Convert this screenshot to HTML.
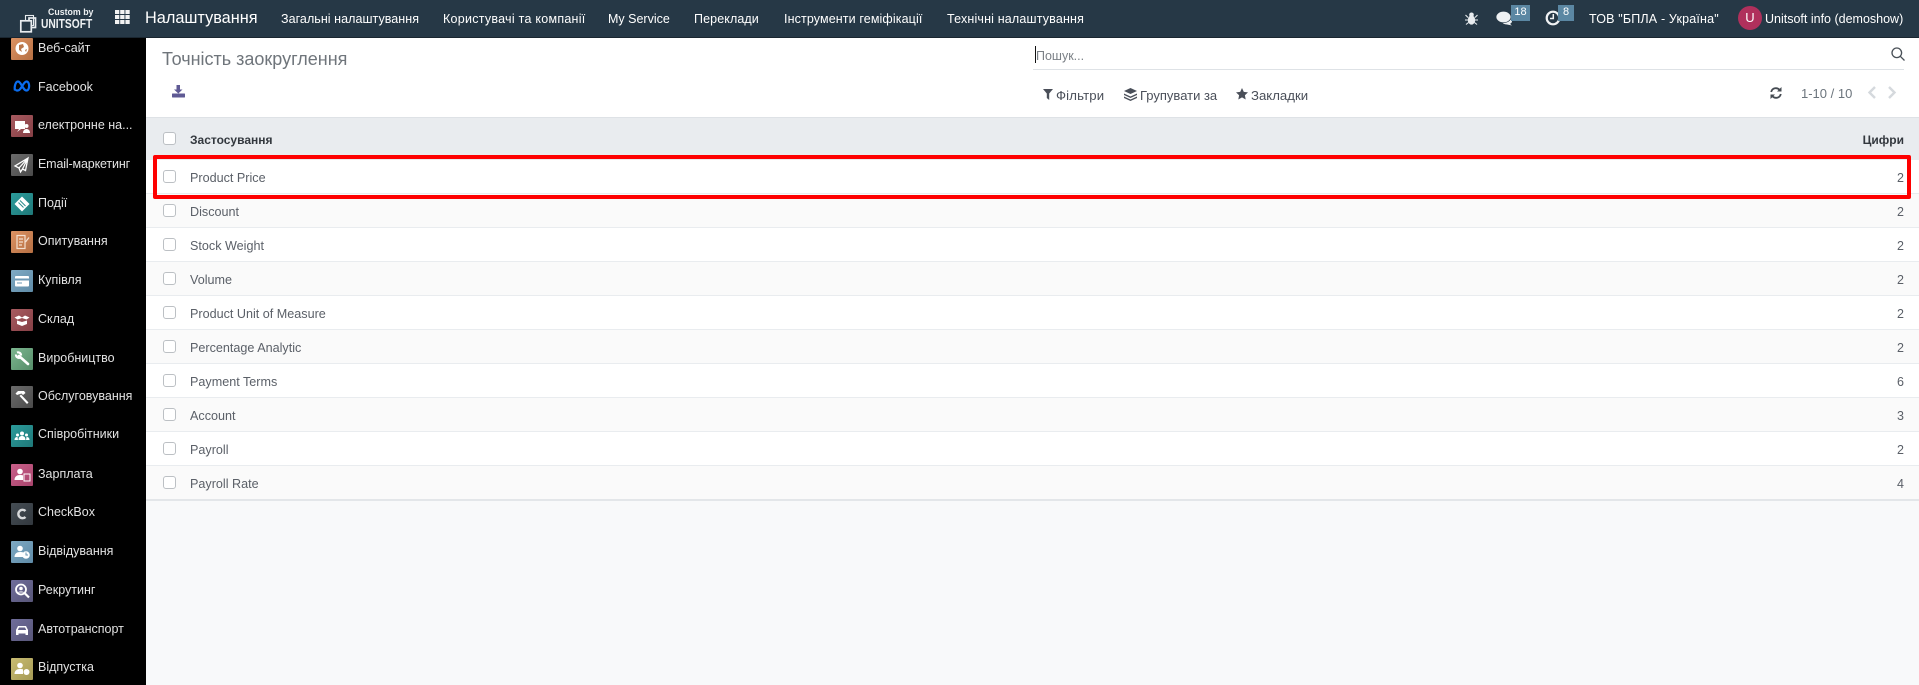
<!DOCTYPE html>
<html lang="uk">
<head>
<meta charset="utf-8">
<title>Точність заокруглення</title>
<style>
html,body{margin:0;padding:0;width:1919px;height:685px;overflow:hidden;background:#f8f9fa;font-family:"Liberation Sans","Noto Sans CJK SC",sans-serif;}
.a{position:absolute;white-space:nowrap;line-height:1;}
#nav{position:absolute;left:0;top:0;width:1919px;height:37px;background:#263846;border-bottom:1px solid #1a2630;}
.m{color:#fff;font-size:12.5px;top:12.5px;}
#side{position:absolute;left:0;top:38px;width:146px;height:647px;background:#000;overflow:hidden;}
.lb{position:absolute;left:38px;color:#e2e2e2;font-size:12.5px;line-height:1;white-space:nowrap;}
.ic{position:absolute;left:11px;width:22px;height:22px;border-radius:1px;}
.ic svg{display:block;width:22px;height:22px;}
#cp{position:absolute;left:146px;top:38px;width:1773px;height:79px;background:#fff;border-bottom:1px solid #dee2e6;}
#th{position:absolute;left:146px;top:118px;width:1773px;height:42px;background:#e9ecef;}
.r{position:absolute;left:146px;width:1773px;height:33px;border-bottom:1px solid #e9ecef;background:#fff;}
.r.e{background:#fafafa;}
.cb{position:absolute;left:163px;width:11px;height:11px;border:1px solid #bcc0c4;border-radius:3px;background:#fff;}
.t{position:absolute;left:190px;color:#5b6068;font-size:12.6px;line-height:1;}
.n{position:absolute;right:15px;color:#5b6068;font-size:12.5px;line-height:1;}
.fb{color:#4a4f59;font-size:13.2px;top:88.5px;}
</style>
</head>
<body>
<div id="nav"></div>

<!-- logo -->
<svg class="a" style="left:18px;top:13px" width="20" height="20" viewBox="0 0 20 20" fill="none" stroke="#e8ecef" stroke-width="1.7"><rect x="7.500" y="2.500" width="8" height="10" stroke-width="1.100"/><rect x="11" y="5" width="6.500" height="9.500"/><rect x="2.800" y="7.800" width="10.500" height="11" fill="#263846"/></svg>
<div class="a" style="left:48px;top:7.500px;color:#eef1f3;font-size:8.800px;font-weight:bold">Custom by</div>
<div class="a" style="left:41px;top:17.500px;color:#eef1f3;font-size:12.500px;font-weight:bold;transform:scaleX(.82);transform-origin:left top">UNITSOFT</div>
<svg class="a" style="left:115px;top:10px" width="15" height="14" viewBox="0 0 15 14" fill="#f2f2f2"><rect x="0" y="0" width="4.300" height="4"/><rect x="5.200" y="0" width="4.300" height="4"/><rect x="10.400" y="0" width="4.300" height="4"/><rect x="0" y="5" width="4.300" height="4"/><rect x="5.200" y="5" width="4.300" height="4"/><rect x="10.400" y="5" width="4.300" height="4"/><rect x="0" y="10" width="4.300" height="4"/><rect x="5.200" y="10" width="4.300" height="4"/><rect x="10.400" y="10" width="4.300" height="4"/></svg>

<div class="a" style="left:145px;top:10px;color:#fff;font-size:16.300px">Налаштування</div>
<div class="a m" style="left:281px;letter-spacing:.05px">Загальні налаштування</div>
<div class="a m" style="left:443px;letter-spacing:.26px">Користувачі та компанії</div>
<div class="a m" style="left:608px">My Service</div>
<div class="a m" style="left:694px;letter-spacing:.1px">Переклади</div>
<div class="a m" style="left:784px;letter-spacing:.12px">Інструменти геміфікації</div>
<div class="a m" style="left:947px;letter-spacing:.17px">Технічні налаштування</div>

<!-- right nav -->
<svg class="a" style="left:1465px;top:12px" width="13" height="13" viewBox="0 0 13 13" fill="#e8ecef"><ellipse cx="6.500" cy="8" rx="3.700" ry="4.600"/><circle cx="6.500" cy="2.800" r="2.300"/><path d="M0.500 3l2.500 2.500M12.500 3L10 5.500M0 8h3M13 8h-3M1 12.500l2.500-2M12 12.500l-2.500-2" stroke="#e8ecef" stroke-width="1.100"/></svg>
<svg class="a" style="left:1496px;top:11px" width="17" height="15" viewBox="0 0 17 15" fill="#eef1f3"><ellipse cx="11" cy="10.500" rx="5" ry="3"/><path d="M13 12l3 2.500-5-1z"/><ellipse cx="7.500" cy="6" rx="7.500" ry="5.700" stroke="#263846" stroke-width=".7"/></svg>
<div class="a" style="left:1511px;top:5px;width:19px;height:16px;background:#5b87a3;color:#fff;font-size:11px;line-height:15px;text-align:center">18</div>
<svg class="a" style="left:1545px;top:10px" width="16" height="16" viewBox="0 0 16 16" fill="none" stroke="#f0f2f4"><circle cx="8" cy="8" r="6.300" stroke-width="2.200"/><path d="M8.300 4v4.500H5" stroke-width="1.500"/></svg>
<div class="a" style="left:1558px;top:5px;width:16px;height:16px;background:#5b87a3;color:#fff;font-size:11px;line-height:15px;text-align:center">8</div>
<div class="a m" style="left:1589px;letter-spacing:.17px">ТОВ "БПЛА - Україна"</div>
<div class="a" style="left:1738px;top:6px;width:24px;height:24px;border-radius:50%;background:#b0305c;color:#fff;font-size:13px;line-height:24px;text-align:center">U</div>
<div class="a m" style="left:1765px">Unitsoft info (demoshow)</div>

<!-- sidebar -->
<div id="side">
  <div class="ic" style="top:0;background:linear-gradient(135deg,#dd9363,#b56f43)"><svg viewBox="0 0 22 22"><circle cx="11" cy="10.500" r="6.500" fill="#fff"/><path d="M8 7l4-1 1 3-3 2 1 3-3-2zM14 12l2-1-1 3z" fill="#b9774c"/></svg></div>
  <div class="lb" style="top:3.500px">Веб-сайт</div>

  <svg style="position:absolute;left:13px;top:42px" width="18" height="12" viewBox="0 0 18 12" fill="none" stroke="#0a6df0" stroke-width="2.200"><path d="M2 10.500C1 7 2.500 1.500 5 1.500c3 0 5 9 8.500 9 3.500 0 3.500-9 0-9-3 0-5.500 9-8.500 9-1.500 0-2.500-.5-3-0"/></svg>
  <div class="lb" style="top:43px">Facebook</div>

  <div class="ic" style="top:77px;background:linear-gradient(135deg,#a85b60,#853f45)"><svg viewBox="0 0 22 22" fill="#fff"><rect x="4" y="6" width="10" height="8"/><path d="M8 14l-2 3 4-3z"/><circle cx="15.500" cy="11" r="2"/><path d="M12 18c0-3 2-4 3.500-4s3.500 1 3.500 4z"/></svg></div>
  <div class="lb" style="top:81px">електронне на...</div>

  <div class="ic" style="top:116px;background:linear-gradient(135deg,#6b6b6b,#4a4a4a)"><svg viewBox="0 0 22 22" fill="none" stroke="#fff" stroke-width="1.300"><path d="M17 4L4 12l4 2 1.500 4 2-3 3 1.500zM8 14l9-10-5.500 11"/></svg></div>
  <div class="lb" style="top:120px;letter-spacing:-.15px">Email-маркетинг</div>

  <div class="ic" style="top:155px;background:linear-gradient(135deg,#2c9c9c,#1f7878)"><svg viewBox="0 0 22 22"><path d="M11 3.500L18.500 11 11 18.500 3.500 11z" fill="#fff"/><path d="M9 7.500l5.500 5.500M7.500 9.500l5 5" stroke="#2a8c8c" stroke-width="1"/></svg></div>
  <div class="lb" style="top:159px">Події</div>

  <div class="ic" style="top:193px;background:linear-gradient(135deg,#dd9363,#b56f43)"><svg viewBox="0 0 22 22" fill="none" stroke="#f3dfcf" stroke-width="1.200"><rect x="6" y="4.500" width="8" height="13"/><path d="M8 8h4M8 11h4M8 14h3M14.500 11L18 6.500" /></svg></div>
  <div class="lb" style="top:197px">Опитування</div>

  <div class="ic" style="top:232px;background:linear-gradient(135deg,#7faac4,#5f8ba7)"><svg viewBox="0 0 22 22"><rect x="4" y="6" width="14" height="10.500" rx="1" fill="#fff"/><rect x="4" y="8.500" width="14" height="2" fill="#6e99b5"/><rect x="6" y="12.500" width="5" height="1" fill="#6e99b5"/></svg></div>
  <div class="lb" style="top:235.500px">Купівля</div>

  <div class="ic" style="top:271px;background:linear-gradient(135deg,#a85b60,#853f45)"><svg viewBox="0 0 22 22" fill="#fff"><path d="M3.500 8.500L8 6.500l3 2 3-2 4.500 2-3 2-4.500-1.500-4.500 1.500z"/><path d="M6 11.500l5 1.500 5-1.500V15l-5 2-5-2z"/></svg></div>
  <div class="lb" style="top:274.500px">Склад</div>

  <div class="ic" style="top:310px;background:linear-gradient(135deg,#7cb68f,#568d69)"><svg viewBox="0 0 22 22" fill="none" stroke="#fff" stroke-width="2.600"><path d="M8 8l9 8" stroke-linecap="round"/><path d="M5 6.500a3 3 0 0 0 5 2.500" stroke-width="2.200"/><path d="M6 4.500a3 3 0 0 1 4 3"  stroke-width="2.200"/></svg></div>
  <div class="lb" style="top:313.500px">Виробництво</div>

  <div class="ic" style="top:348px;background:linear-gradient(135deg,#6b6b6b,#4a4a4a)"><svg viewBox="0 0 22 22" fill="#fff"><path d="M7 5l6 0 1.500 2-2.500 2-1.500-1.500L6 9 4.500 7.500z"/><path d="M10 8.500l7.500 8-1.500 1.500-7.500-8z"/></svg></div>
  <div class="lb" style="top:352px">Обслуговування</div>

  <div class="ic" style="top:387px;background:linear-gradient(135deg,#2c9c9c,#1f7878)"><svg viewBox="0 0 22 22" fill="#fff"><circle cx="11" cy="8.500" r="2"/><circle cx="6.500" cy="10" r="1.500"/><circle cx="15.500" cy="10" r="1.500"/><path d="M7.500 15c0-3 1.500-4 3.500-4s3.500 1 3.500 4zM3.500 15c0-2 1-3 3-3l.5 3zM18.500 15c0-2-1-3-3-3l-.5 3z"/></svg></div>
  <div class="lb" style="top:390px">Співробітники</div>

  <div class="ic" style="top:426px;background:linear-gradient(135deg,#c9608a,#a8446c)"><svg viewBox="0 0 22 22" fill="#fff"><circle cx="9" cy="7.500" r="2.800"/><path d="M3.500 16c0-3.500 2.500-5 5.500-5s3 .5 3 .5V16z"/><rect x="13" y="10" width="6" height="7" fill="none" stroke="#fff"/></svg></div>
  <div class="lb" style="top:429.500px">Зарплата</div>

  <div class="ic" style="top:465px;background:linear-gradient(135deg,#454d54,#32383e)"><svg viewBox="0 0 22 22" fill="none" stroke="#d8dadc" stroke-width="2.400"><path d="M14.500 8a4.200 4.200 0 1 0 0 6"/></svg></div>
  <div class="lb" style="top:468px">CheckBox</div>

  <div class="ic" style="top:503px;background:linear-gradient(135deg,#7faac4,#5f8ba7)"><svg viewBox="0 0 22 22" fill="#fff"><circle cx="9" cy="7.500" r="2.800"/><path d="M3.500 16c0-3.500 2.500-5 5.500-5s3 .5 3 .5V16z"/><circle cx="15" cy="14" r="3.800"/><path d="M15 11.500V14h2" stroke="#6b96b2" fill="none"/></svg></div>
  <div class="lb" style="top:507px">Відвідування</div>

  <div class="ic" style="top:542px;background:linear-gradient(135deg,#6f6d9b,#585678)"><svg viewBox="0 0 22 22"><circle cx="10" cy="9.500" r="5" fill="none" stroke="#fff" stroke-width="1.800"/><circle cx="10" cy="8.500" r="1.800" fill="#fff"/><path d="M7 12.500c.5-1.500 5.500-1.500 6 0z" fill="#fff"/><path d="M14 13.500l4 4" stroke="#fff" stroke-width="2.200"/></svg></div>
  <div class="lb" style="top:545.500px">Рекрутинг</div>

  <div class="ic" style="top:581px;background:linear-gradient(135deg,#6f6d9b,#585678)"><svg viewBox="0 0 22 22" fill="#fff"><path d="M7 7h8l2 4v5h-2.500v-1.500h-7V16H5v-5zM8 8.500L6.800 11h8.400L14 8.500z"/></svg></div>
  <div class="lb" style="top:584.500px">Автотранспорт</div>

  <div class="ic" style="top:620px;background:linear-gradient(135deg,#c9bc72,#a59a55)"><svg viewBox="0 0 22 22" fill="#fff"><circle cx="9" cy="7.500" r="2.800"/><path d="M3.500 16c0-3.500 2.500-5 5.500-5s3 .5 3 .5V16z"/><circle cx="15.500" cy="14" r="3" /></svg></div>
  <div class="lb" style="top:623px">Відпустка</div>
</div>

<!-- control panel -->
<div id="cp"></div>
<div class="a" style="left:162px;top:49.500px;color:#6f757b;font-size:18px">Точність заокруглення</div>
<svg class="a" style="left:172px;top:85px" width="13" height="13" viewBox="0 0 13 13" fill="#5f5a94"><path d="M4.500 0h3.500v4.500h2.500L6.300 8.500 2 4.500h2.500z"/><rect x="0" y="8.500" width="13" height="4" rx=".5"/></svg>

<div class="a" style="left:1035px;top:46px;width:1px;height:17px;background:#111"></div>
<div class="a" style="left:1036px;top:49.500px;color:#7b8086;font-size:12.500px">Пошук...</div>
<div class="a" style="left:1033px;top:69px;width:871px;height:1px;background:#dee2e6"></div>
<svg class="a" style="left:1891px;top:47px" width="14" height="14" viewBox="0 0 14 14" fill="none" stroke="#495057" stroke-width="1.300"><circle cx="5.800" cy="5.800" r="4.800"/><path d="M9.300 9.300L13.500 13.500"/></svg>

<svg class="a" style="left:1043px;top:89px" width="10" height="11" viewBox="0 0 10 11" fill="#4a4f59"><path d="M0 0h10L6.200 4.500V11L3.800 9V4.500z"/></svg>
<div class="a fb" style="left:1056px;letter-spacing:.15px">Фільтри</div>
<svg class="a" style="left:1124px;top:88px" width="13" height="13" viewBox="0 0 13 13" fill="#4a4f59"><path d="M6.500 0L13 3 6.500 6 0 3z"/><path d="M0 5.500l6.500 3 6.500-3V7L6.500 10 0 7z"/><path d="M0 8.500l6.500 3 6.500-3V10l-6.500 3L0 10z"/></svg>
<div class="a fb" style="left:1140px;font-size:13px">Групувати за</div>
<svg class="a" style="left:1236px;top:88px" width="12" height="12" viewBox="0 0 12 12" fill="#4a4f59"><path d="M6 0l1.800 3.900 4.200.5-3.100 2.900.8 4.200L6 9.400 2.300 11.500l.8-4.200L0 4.400l4.200-.5z"/></svg>
<div class="a fb" style="left:1251px">Закладки</div>

<svg class="a" style="left:1770px;top:87px" width="12" height="12" viewBox="0 0 12 12" fill="none" stroke="#454b52" stroke-width="1.800"><path d="M1.200 5A4.800 4.800 0 0 1 9.800 3.200M10.800 7A4.800 4.800 0 0 1 2.200 8.800"/><path d="M11.500 0v4.500H7z" fill="#454b52" stroke="none"/><path d="M.5 12V7.500H5z" fill="#454b52" stroke="none"/></svg>
<div class="a" style="left:1801px;top:87px;color:#6c757d;font-size:13px">1-10 / 10</div>
<svg class="a" style="left:1867px;top:86px" width="30" height="13" viewBox="0 0 30 13" fill="none" stroke="#d5d9dd" stroke-width="2.400"><path d="M8 1L2.500 6.500 8 12M22 1l5.500 5.500L22 12"/></svg>

<!-- table -->
<div id="th"></div>
<div class="cb" style="top:132px"></div>
<div class="t" style="top:134px;color:#33383e;font-weight:bold;font-size:12px">Застосування</div>
<div class="n" style="top:134px;color:#33383e;font-weight:bold;font-size:12px">Цифри</div>

<div class="r" style="top:160px"></div>
<div class="r e" style="top:194px"></div>
<div class="r" style="top:228px"></div>
<div class="r e" style="top:262px"></div>
<div class="r" style="top:296px"></div>
<div class="r e" style="top:330px"></div>
<div class="r" style="top:364px"></div>
<div class="r e" style="top:398px"></div>
<div class="r" style="top:432px"></div>
<div class="r e" style="top:466px;border-bottom:2px solid #e3e6e9"></div>

<div class="cb" style="top:170px"></div><div class="t" style="top:172px">Product Price</div><div class="n" style="top:172px">2</div>
<div class="cb" style="top:204px"></div><div class="t" style="top:206px">Discount</div><div class="n" style="top:206px">2</div>
<div class="cb" style="top:238px"></div><div class="t" style="top:240px">Stock Weight</div><div class="n" style="top:240px">2</div>
<div class="cb" style="top:272px"></div><div class="t" style="top:274px">Volume</div><div class="n" style="top:274px">2</div>
<div class="cb" style="top:306px"></div><div class="t" style="top:308px">Product Unit of Measure</div><div class="n" style="top:308px">2</div>
<div class="cb" style="top:340px"></div><div class="t" style="top:342px">Percentage Analytic</div><div class="n" style="top:342px">2</div>
<div class="cb" style="top:374px"></div><div class="t" style="top:376px">Payment Terms</div><div class="n" style="top:376px">6</div>
<div class="cb" style="top:408px"></div><div class="t" style="top:410px">Account</div><div class="n" style="top:410px">3</div>
<div class="cb" style="top:442px"></div><div class="t" style="top:444px">Payroll</div><div class="n" style="top:444px">2</div>
<div class="cb" style="top:476px"></div><div class="t" style="top:478px">Payroll Rate</div><div class="n" style="top:478px">4</div>

<!-- red highlight -->
<div class="a" style="left:153px;top:155px;width:1750px;height:36px;border:4px solid #fe0000;border-radius:2px"></div>
</body>
</html>
